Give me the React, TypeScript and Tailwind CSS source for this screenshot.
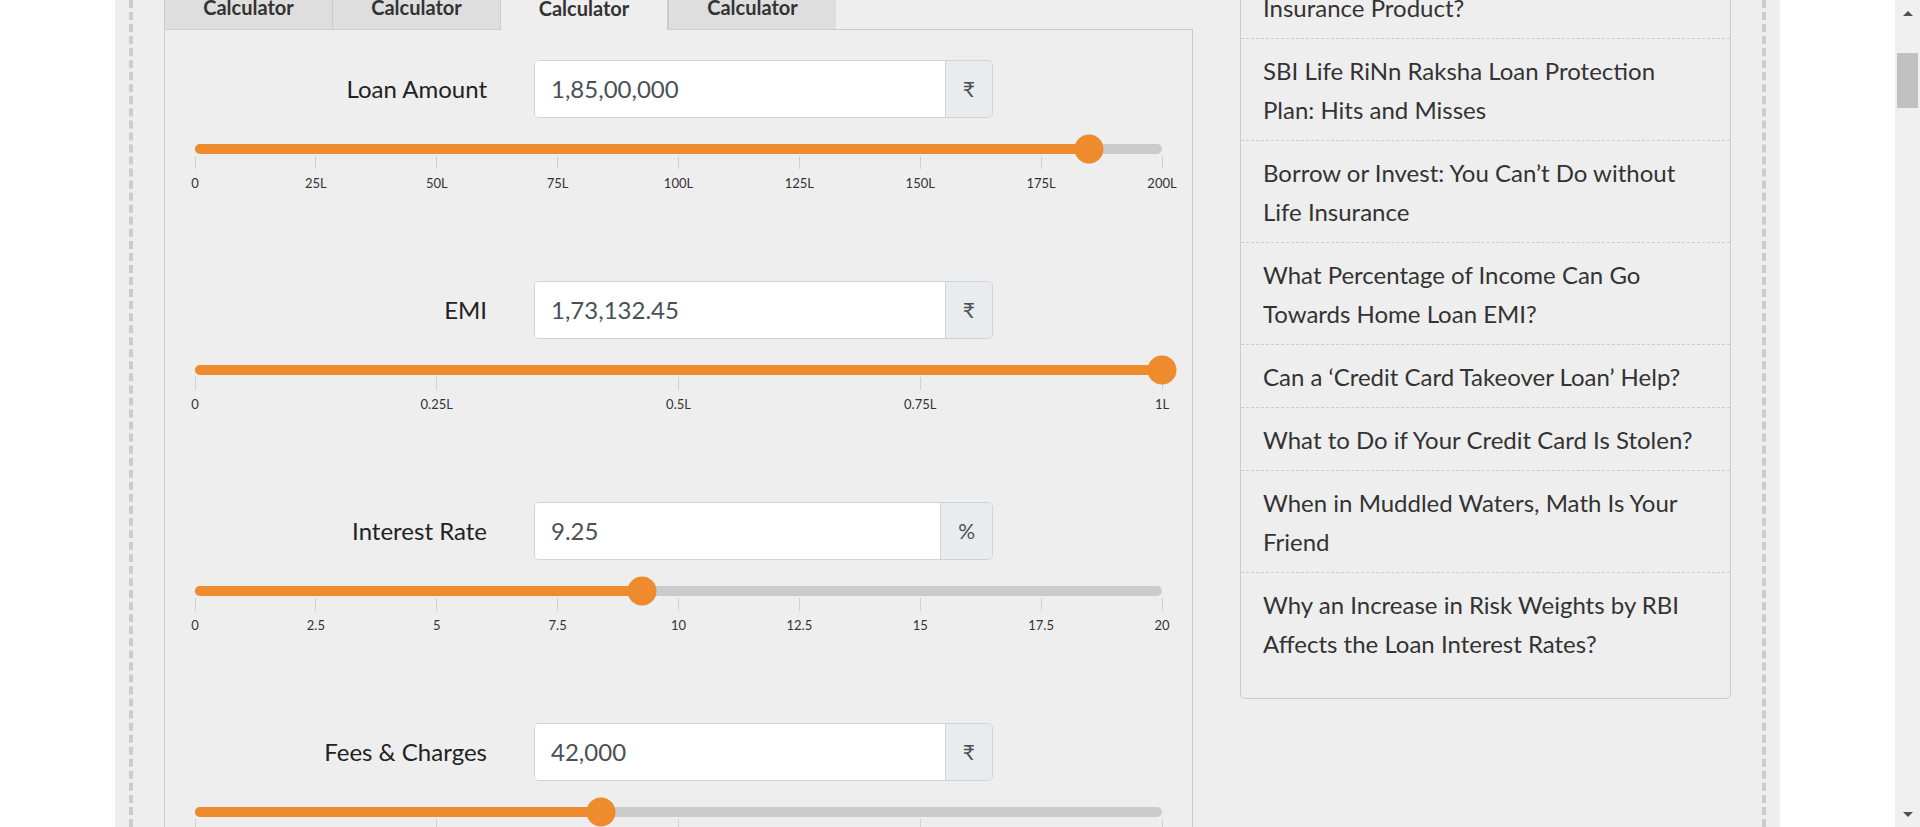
import React from 'react';

interface FieldProps {
  label: string;
  value: string;
  unit: string;
  pct: number;
  ticks: string[];
}

const fields: FieldProps[] = [
  {
    label: 'Loan Amount',
    value: '1,85,00,000',
    unit: '₹',
    pct: 92.5,
    ticks: ['0', '25L', '50L', '75L', '100L', '125L', '150L', '175L', '200L'],
  },
  {
    label: 'EMI',
    value: '1,73,132.45',
    unit: '₹',
    pct: 100,
    ticks: ['0', '0.25L', '0.5L', '0.75L', '1L'],
  },
  {
    label: 'Interest Rate',
    value: '9.25',
    unit: '%',
    pct: 46.25,
    ticks: ['0', '2.5', '5', '7.5', '10', '12.5', '15', '17.5', '20'],
  },
  {
    label: 'Fees & Charges',
    value: '42,000',
    unit: '₹',
    pct: 42,
    ticks: ['0', '25K', '50K', '75K', '1L'],
  },
];

const articles = [
  ['Insurance Product?'],
  ['SBI Life RiNn Raksha Loan Protection', 'Plan: Hits and Misses'],
  ['Borrow or Invest: You Can’t Do without', 'Life Insurance'],
  ['What Percentage of Income Can Go', 'Towards Home Loan EMI?'],
  ['Can a ‘Credit Card Takeover Loan’ Help?'],
  ['What to Do if Your Credit Card Is Stolen?'],
  ['When in Muddled Waters, Math Is Your', 'Friend'],
  ['Why an Increase in Risk Weights by RBI', 'Affects the Loan Interest Rates?'],
];

const tabs = ['Calculator', 'Calculator', 'Calculator', 'Calculator'];

const Slider: React.FC<{ pct: number; ticks: string[] }> = ({ pct, ticks }) => (
  <div className="mt-[26px]">
    <div className="relative h-[10px] rounded-full bg-[#cbcbcb]">
      <div className="h-full rounded-full bg-[#ee8b2c]" style={{ width: `${pct}%` }} />
      <div
        className="absolute top-1/2 h-[29px] w-[29px] -translate-x-1/2 -translate-y-1/2 rounded-full bg-[#ee8b2c]"
        style={{ left: `${pct}%` }}
      />
    </div>
    <div className="mt-[2px] flex justify-between">
      {ticks.map((t, i) => (
        <div key={i} className="flex w-0 flex-col items-center">
          <div className="h-[13px] w-px shrink-0 bg-[#d0d0d0]" />
          <div className="mt-[7px] whitespace-nowrap text-[13px] leading-[14px] text-[#333]">{t}</div>
        </div>
      ))}
    </div>
  </div>
);

const Field: React.FC<FieldProps> = ({ label, value, unit, pct, ticks }) => (
  <div className="h-[221px]">
    <div className="flex items-center gap-[47px]">
      <div className="w-[292px] text-right text-[24px] text-[#222]">{label}</div>
      <div className="flex h-[58px] w-[459px] overflow-hidden rounded-[5px] border border-[#ced4da]">
        <div className="flex flex-1 items-center bg-white pl-[16px] text-[24px] text-[#495057]">{value}</div>
        <div className="flex items-center border-l border-[#ced4da] bg-[#e9ecef] px-[17px] text-[21px] text-[#495057]">
          {unit}
        </div>
      </div>
    </div>
    <Slider pct={pct} ticks={ticks} />
  </div>
);

export default function App() {
  return (
    <div className="flex h-[827px] w-full overflow-hidden bg-white font-['Lato',sans-serif]">
      <div className="flex-1 overflow-hidden">
        <div className="mx-auto flex h-full w-[1665px] flex-col bg-[#eeeeee] px-[14px]">
          <div className="flex h-full flex-col border-x-4 border-dashed border-[#cccccc] px-[31px]">
            <div className="-mt-[15px] flex items-start justify-between">
              {/* calculator */}
              <div className="w-[1029px]">
                <div className="flex">
                  {tabs.map((t, i) => (
                    <div
                      key={i}
                      className={
                        i === 2
                          ? 'flex h-[45px] w-[168px] items-end justify-center border-x border-[#cccccc] bg-[#eeeeee] pb-[10px] text-[20px] leading-[24px] font-bold text-[#333]'
                          : 'flex h-[45px] w-[168px] items-end justify-center border-b border-l border-[#cccccc] bg-[#dedede] pb-[10px] text-[20px] leading-[24px] font-bold text-[#333] last:border-r'
                      }
                    >
                      {t}
                    </div>
                  ))}
                  <div className="flex-1 border-b border-[#cccccc]" />
                </div>
                <div className="h-[900px] border-x border-[#cccccc] px-[30px] pt-[30px]">
                  {fields.map((f) => (
                    <Field key={f.label} {...f} />
                  ))}
                </div>
              </div>

              {/* sidebar */}
              <div className="-mt-[9px] w-[491px] rounded-b-[5px] border-x border-b border-[#cccccc] pb-[24px]">
                {articles.map((lines, i) => (
                  <div
                    key={i}
                    className={
                      i === 0
                        ? 'px-[22px] py-[11.5px] text-[24px] leading-[39px] whitespace-nowrap text-[#333]'
                        : 'border-t border-dashed border-[#cccccc] px-[22px] py-[11.5px] text-[24px] leading-[39px] whitespace-nowrap text-[#333]'
                    }
                  >
                    {lines.map((l, j) => (
                      <div key={j}>{l}</div>
                    ))}
                  </div>
                ))}
              </div>
            </div>
          </div>
        </div>
      </div>

      {/* scrollbar */}
      <div className="flex w-[25px] shrink-0 flex-col items-center bg-[#f0f0f0]">
        <div className="flex h-[26px] items-center">
          <div className="h-0 w-0 border-x-[5px] border-b-[5px] border-x-transparent border-b-[#505050]" />
        </div>
        <div className="mt-[27px] h-[55px] w-[21px] bg-[#c1c1c1]" />
        <div className="flex-1" />
        <div className="flex h-[26px] items-center">
          <div className="h-0 w-0 border-x-[5px] border-t-[5px] border-x-transparent border-t-[#505050]" />
        </div>
      </div>
    </div>
  );
}
